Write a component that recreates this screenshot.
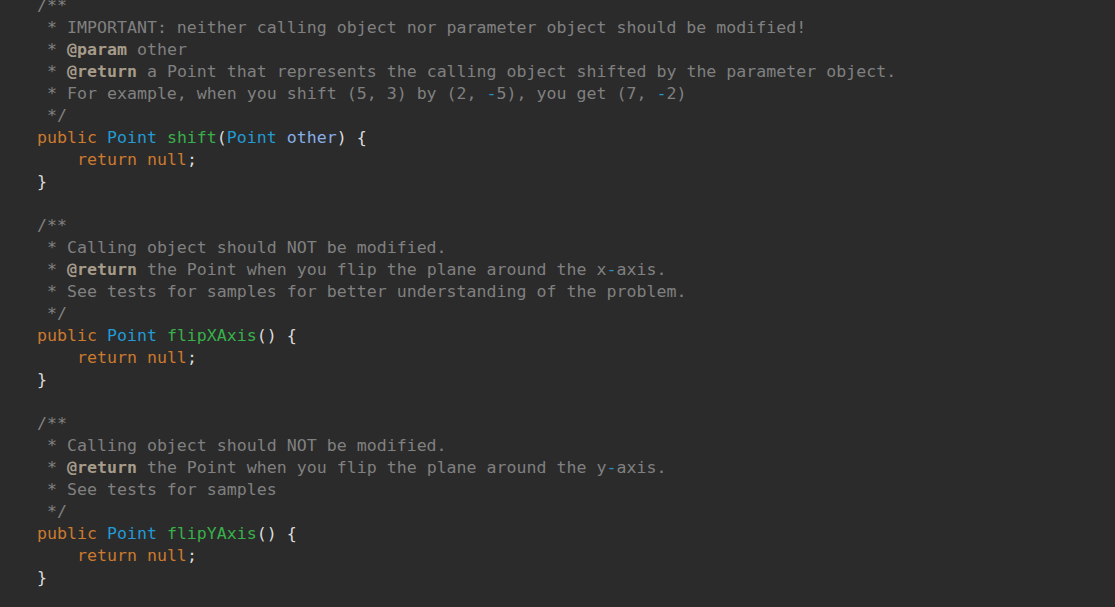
import React from 'react';

type Kind = 'c' | 'tag' | 'kw' | 'type' | 'fn' | 'param' | 'pl' | 'num';
type Tok = [Kind, string];

const colors: Record<Kind, string> = {
  c: 'text-[#808080]',
  tag: 'text-[#a79c8a] font-bold',
  kw: 'text-[#cc7a2f]',
  type: 'text-[#229ad4]',
  fn: 'text-[#38b04a]',
  param: 'text-[#88aee8]',
  pl: 'text-[#dcdcdc]',
  num: 'text-[#2a8fc4]',
};

function method(name: string, args: Tok[], doc: Tok[][]): Tok[][] {
  return [
    [['c', '/**']],
    ...doc,
    [['c', ' */']],
    [['kw', 'public '], ['type', 'Point '], ['fn', name], ['pl', '(']].concat(args, [['pl', ') {']]) as Tok[],
    [['pl', '    '], ['kw', 'return null'], ['pl', ';']],
    [['pl', '}']],
  ];
}

const lines: Tok[][] = [
  ...method('shift', [['type', 'Point '], ['param', 'other']], [
    [['c', ' * IMPORTANT: neither calling object nor parameter object should be modified!']],
    [['c', ' * '], ['tag', '@param'], ['c', ' other']],
    [['c', ' * '], ['tag', '@return'], ['c', ' a Point that represents the calling object shifted by the parameter object.']],
    [['c', ' * For example, when you shift (5, 3) by (2, '], ['num', '-'], ['c', '5), you get (7, '], ['num', '-'], ['c', '2)']],
  ]),
  [],
  ...method('flipXAxis', [], [
    [['c', ' * Calling object should NOT be modified.']],
    [['c', ' * '], ['tag', '@return'], ['c', ' the Point when you flip the plane around the x'], ['num', '-'], ['c', 'axis.']],
    [['c', ' * See tests for samples for better understanding of the problem.']],
  ]),
  [],
  ...method('flipYAxis', [], [
    [['c', ' * Calling object should NOT be modified.']],
    [['c', ' * '], ['tag', '@return'], ['c', ' the Point when you flip the plane around the y'], ['num', '-'], ['c', 'axis.']],
    [['c', ' * See tests for samples']],
  ]),
];

export default function App() {
  return (
    <div className="w-[1115px] h-[607px] overflow-hidden bg-[#2b2b2b]">
      <div
        className="-mt-[5px] pl-[37px] text-[16.6px] leading-[22px] whitespace-pre"
        style={{ fontFamily: '"DejaVu Sans Mono", "Liberation Mono", monospace' }}
      >
        {lines.map((line, i) => (
          <div key={i} className="h-[22px]">
            {line.map(([k, t], j) => (
              <span key={j} className={colors[k]}>{t}</span>
            ))}
          </div>
        ))}
      </div>
    </div>
  );
}
